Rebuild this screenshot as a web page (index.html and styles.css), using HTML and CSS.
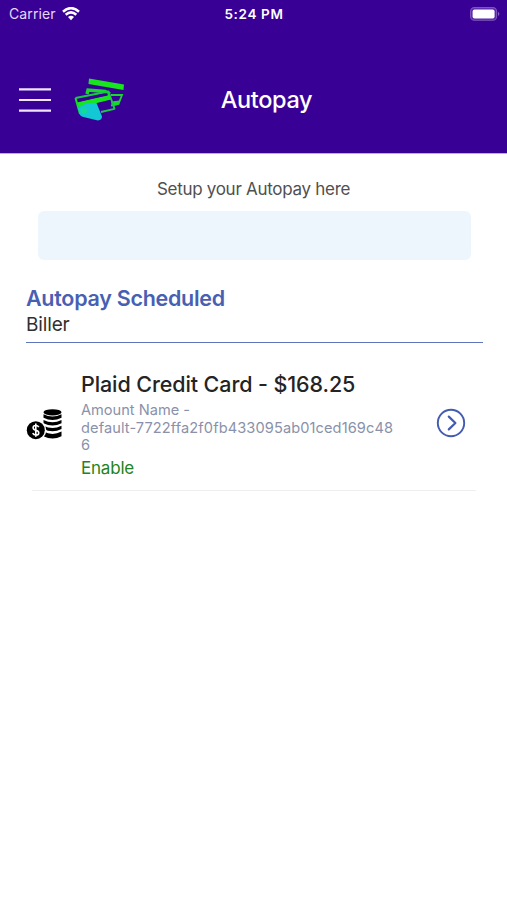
FILE: index.html
```html
<!DOCTYPE html>
<html lang="en">
<head>
<meta charset="utf-8">
<title>Autopay</title>
<link rel="stylesheet" href="styles.css">
</head>
<body>
<header class="header">
  <div class="status">
    <div class="carrier"><span>Carrier</span>
      <svg width="18" height="14" viewBox="0 0 18 14" fill="none" stroke="#fff" stroke-width="2.5"><path d="M1 4.700Q9-2.500 17 4.700M3.700 7.800Q9 3 14.300 7.800"/><path d="M6 9.900Q9 7.400 12 9.900L9 13.200Z" fill="#fff" stroke="none"/></svg>
    </div>
    <div class="time">5:24 PM</div>
    <svg class="battery" width="30" height="14" viewBox="0 0 30 14"><rect x=".6" y=".6" width="26" height="12.6" rx="3.8" fill="#5a26a8" stroke="#7e55bd" stroke-width="1.1"/><rect x="2.600" y="2.400" width="22" height="9" rx="2" fill="#fff"/><path d="M28.200 4.800q2.200 2.100 0 4.200z" fill="#9a78cb"/></svg>
  </div>
  <div class="nav">
    <div class="nav-left">
      <svg width="32" height="26" viewBox="0 0 32 26" stroke="#f1e4ff" stroke-width="2.2"><path d="M0 2.300h32M0 13h32M0 23.700h32"/></svg>
      <svg class="logo" width="52" height="46" viewBox="0 0 52 46">
        <path d="M15 1.500L50 7.500 49.500 13 14.500 7Z" fill="#17e51d"/>
        <path d="M13 17L14 13 31 14.500 36 17" fill="none" stroke="#17d92c" stroke-width="3.400"/>
        <path d="M37 18L48 18 44.500 27 37 28.500" fill="none" stroke="#17d92c" stroke-width="1.800"/>
        <path d="M37 24.500L45.500 23.500 44 28 38 28.500Z" fill="#17d92c"/>
        <path d="M1.500 21L34.500 14.500 40.500 31.800 27 35" fill="none" stroke="#16ca45" stroke-width="1.900" stroke-linejoin="round"/>
        <path d="M3 25.500L35.500 17.500 37 22.500 4.500 30.500Z" fill="#17e51d"/>
        <path d="M5.500 23.300L33.500 17.300" stroke="#390096" stroke-width="2.600"/>
        <path d="M1.500 21L6 37" stroke="#17d92c" stroke-width="2"/>
        <path d="M4 31Q12 25 22.500 26L28 39.500Q28 43 24 43.500L9.500 40Q6 39 5.500 36.500Z" fill="#12c8d5"/>
        <circle cx="10" cy="34" r="3" fill="#14db91"/>
      </svg>
    </div>
    <h1 class="title">Autopay</h1>
    <div></div>
  </div>
</header>
<main class="main">
  <p class="intro"><span>Setup your Autopay here</span></p>
  <div class="panel"></div>
  <section class="section-head">
    <h2>Autopay Scheduled</h2>
    <p>Biller</p>
  </section>
  <article class="item">
    <svg class="coins" width="38" height="34" viewBox="0 0 38 34">
      <ellipse cx="26.500" cy="4.300" rx="9" ry="3.100"/>
      <path d="M17.500 6.200q9 4.600 18 0v3.500q-9 4.600-18 0zM17.500 12q9 4.600 18 0v3.200q-9 4.600-18 0zM17.500 17.800q9 4.600 18 0v3.200q-9 4.600-18 0zM17.500 23.600q9 4.600 18 0v4.600q-9 4.400-18 0z"/>
      <circle cx="9.800" cy="22.200" r="10.500" fill="#fff"/>
      <circle cx="9.800" cy="22.200" r="9"/>
      <path d="M12.800 19.200q-1-1.700-3-1.700-2.700 0-2.700 2.200 0 1.700 2.700 2.500 3 .8 3 2.700 0 2.100-2.900 2.100-2.300 0-3.200-1.900M9.800 15.600v13.200" fill="none" stroke="#fff" stroke-width="1.600"/>
    </svg>
    <div class="details">
      <h3>Plaid Credit Card - $168.25</h3>
      <div class="amount"><div class="amount-label">Amount Name -</div><div>default-7722ffa2f0fb433095ab01ced169c48</div><div>6</div></div>
      <div class="enable">Enable</div>
    </div>
    <svg class="go" width="30" height="30" viewBox="0 0 30 30" fill="none" stroke="#435bb0"><circle cx="15" cy="15" r="13.200" stroke-width="1.900"/><path d="M12.800 8.600L19.400 15 12.800 21.400" stroke-width="2.200" stroke-linecap="round" stroke-linejoin="round"/></svg>
  </article>
</main>
</body>
</html>
```
FILE: styles.css
```css
* { box-sizing: border-box; }
body { margin: 0; min-height: 900px; background: #fff; font-family: Inter, "Liberation Sans", sans-serif; }
h1, h2, h3, p { margin: 0; }
svg { display: block; flex: none; }
.header { height: 154px; background: #390096; border-bottom: 1px solid #c7a4ef; color: #fff; }
.status { height: 27px; display: grid; grid-template-columns: 1fr auto 1fr; align-items: center; padding: 0 7px 0 9px; }
.carrier { display: flex; align-items: center; gap: 6px; font-size: 14px; color: #e6d8fa; letter-spacing: .1px; }
.time { font-size: 13.5px; font-weight: 600; letter-spacing: .65px; margin-right: 1px; }
.battery { justify-self: end; }
.nav { height: 126px; display: grid; grid-template-columns: 1fr auto 1fr; align-items: center; padding: 20px 0 0 19px; }
.nav-left { display: flex; align-items: center; gap: 23px; }
.title { font-size: 23.5px; font-weight: 500; line-height: 28px; letter-spacing: -.35px; padding-left: 7px; }
.main { padding: 24px 24px 0 26px; }
.intro { padding-right: 2px; text-align: center; font-size: 17px; line-height: 22px; color: #505050; letter-spacing: -.29px; }
.panel { height: 49px; margin: 11px 12px 0; border-radius: 6px; background: #edf6fc; }
.section-head { margin-top: 25px; height: 58px; border-bottom: 1px solid #6075bd; }
.section-head h2 { font-size: 21.5px; line-height: 26px; font-weight: 600; color: #495fb3; letter-spacing: -.28px; }
.section-head p { font-size: 19px; line-height: 28px; color: #303030; letter-spacing: -.15px; }
.item { display: grid; grid-template-columns: 55px 1fr 30px; align-items: center; height: 148px; padding: 11px 17px 0 0; background: linear-gradient(#eee, #eee) 6px 100% / 444px 1px no-repeat; }
.coins { margin-top: 5px; }
.details { align-self: start; padding-top: 16px; white-space: nowrap; }
.details h3 { font-size: 21.5px; line-height: 28px; font-weight: 500; color: #242424; letter-spacing: -.1px; }
.amount { padding-top: 4px; font-size: 14.6px; line-height: 17.5px; color: #8a91aa; letter-spacing: .1px; }
.amount-label { letter-spacing: 0; }
.enable { margin-top: 2px; font-size: 17px; line-height: 22px; color: #228322; letter-spacing: -.2px; }
```
